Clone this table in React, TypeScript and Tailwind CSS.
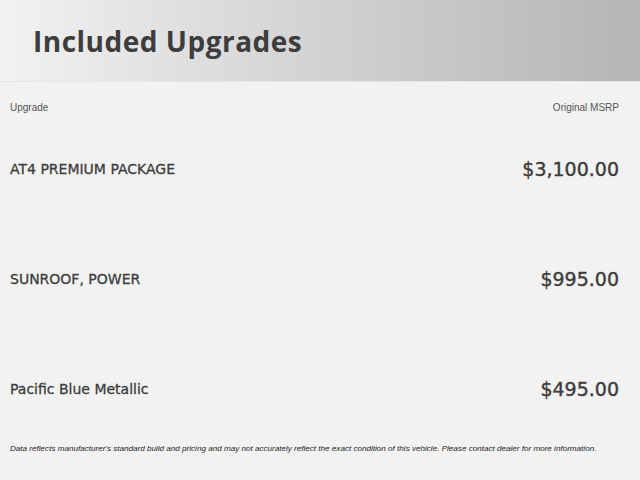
export default function App() {
  const rows = [
    { name: "AT4 PREMIUM PACKAGE", price: "$3,100.00" },
    { name: "SUNROOF, POWER", price: "$995.00" },
    { name: "Pacific Blue Metallic", price: "$495.00" },
  ];
  return (
    <div className="w-[640px] h-[480px] bg-[#f2f2f2] flex flex-col overflow-hidden">
      <div className="h-[82px] bg-gradient-to-r from-[#f2f2f2] via-[#d2d2d2] to-[#b5b5b5] flex items-center pl-[33px] border-b border-[#e6e6e6]">
        <h1 className="text-[28px] font-bold tracking-[0.5px] text-[#3d3d3d] font-['Open_Sans',sans-serif]">
          Included Upgrades
        </h1>
      </div>
      <div className="flex justify-between pl-[10px] pr-[21px] pt-[18px] text-[10px] text-[#555] font-['Liberation_Sans',Arial,sans-serif]">
        <span>Upgrade</span>
        <span>Original MSRP</span>
      </div>
      <div className="flex flex-col -mt-px">
        {rows.map((r) => (
          <div key={r.name} className="flex justify-between items-center pl-[10px] pr-[21px] h-[110px] text-[#3d3d3d] font-['DejaVu_Sans',sans-serif]">
            <span className="text-[14px] [-webkit-text-stroke:0.3px_#3d3d3d]">{r.name}</span>
            <span className="text-[19px] [-webkit-text-stroke:0.4px_#3d3d3d]">{r.price}</span>
          </div>
        ))}
      </div>
      <div className="px-[10px] -mt-px text-[8.1px] italic text-[#222] whitespace-nowrap font-['Liberation_Sans',Arial,sans-serif]">
        Data reflects manufacturer's standard build and pricing and may not accurately reflect the exact condition of this vehicle. Please contact dealer for more information.
      </div>
    </div>
  );
}
